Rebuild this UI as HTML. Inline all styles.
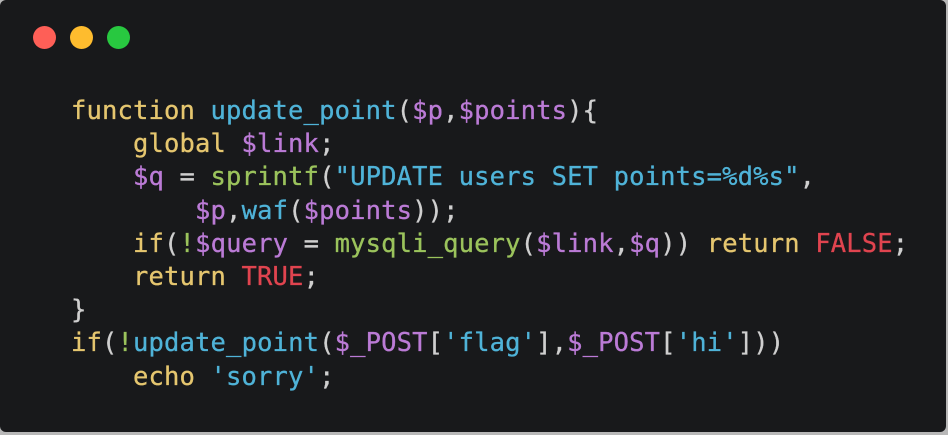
<!DOCTYPE html>
<html><head><meta charset="utf-8"><style>
html,body{margin:0;padding:0;width:948px;height:435px;overflow:hidden;background:#b8b8b8;}
.win{position:absolute;left:0;top:0;width:946px;height:432px;background:#18191b;border-radius:6px;}
.dot{position:absolute;top:26px;width:23px;height:23px;border-radius:50%;}
pre{position:absolute;left:71px;top:95px;margin:0;font-family:"DejaVu Sans Mono","Liberation Mono",monospace;font-size:25.5px;letter-spacing:0.15px;line-height:33.2px;color:#cfcfcf;-webkit-text-stroke:0.3px currentColor;}
.k{color:#e5c66f}.f{color:#4fb3d8}.v{color:#bb7bd6}.g{color:#9bc35c}.r{color:#e0444f}.s{color:#4fb3d8}
</style></head><body>
<div class="win">
<div class="dot" style="left:33px;background:#fe5f57"></div>
<div class="dot" style="left:70px;background:#febc2e"></div>
<div class="dot" style="left:107px;background:#28c840"></div>
<pre><span class="k">function</span> <span class="f">update_point</span>(<span class="v">$p</span>,<span class="v">$points</span>){
    <span class="k">global</span> <span class="v">$link</span>;
    <span class="v">$q</span> = <span class="g">sprintf</span>(<span class="s">"UPDATE users SET points=%d%s"</span>,
        <span class="v">$p</span>,<span class="f">waf</span>(<span class="v">$points</span>));
    <span class="k">if</span>(<span class="g">!</span><span class="v">$query</span> = <span class="g">mysqli_query</span>(<span class="v">$link</span>,<span class="v">$q</span>)) <span class="k">return</span> <span class="r">FALSE</span>;
    <span class="k">return</span> <span class="r">TRUE</span>;
}
<span class="k">if</span>(<span class="g">!</span><span class="f">update_point</span>(<span class="v">$_POST</span>[<span class="s">'flag'</span>],<span class="v">$_POST</span>[<span class="s">'hi'</span>]))
    <span class="k">echo</span> <span class="s">'sorry'</span>;</pre>
</div>
</body></html>
